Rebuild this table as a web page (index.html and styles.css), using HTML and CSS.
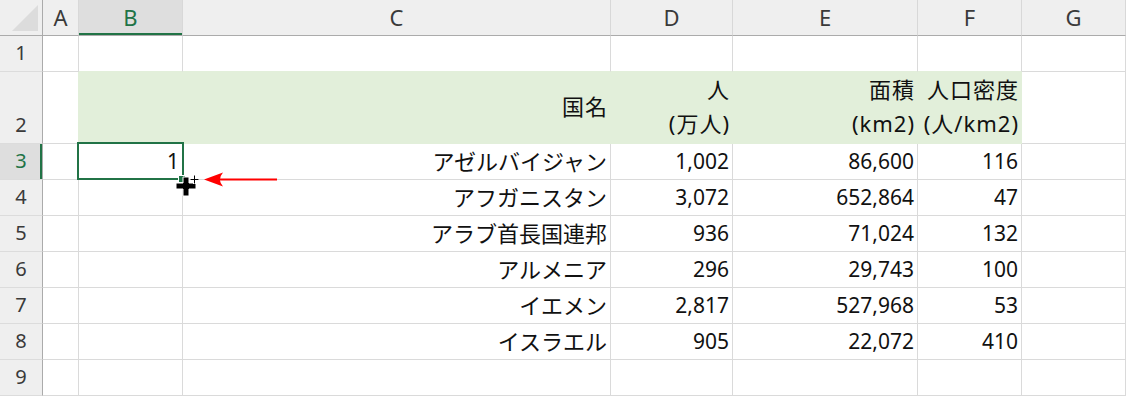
FILE: index.html
```html
<!DOCTYPE html>
<html lang="ja">
<head>
<meta charset="utf-8">
<title>Sheet</title>
<link rel="stylesheet" href="styles.css">
</head>
<body>
<div class="wrap">
  <div class="sheet">
    <div class="corner"><svg width="42" height="35" viewBox="0 0 42 35"><polygon points="12,31 38,31 38,5" fill="#dcdcdc"/></svg></div>
    <div class="ch">A</div>
    <div class="ch sel">B</div>
    <div class="ch">C</div>
    <div class="ch">D</div>
    <div class="ch">E</div>
    <div class="ch">F</div>
    <div class="ch">G</div>

    <div class="rh">1</div>
    <div class="c"></div>
    <div class="c gt"></div>
    <div class="c gt"></div>
    <div class="c gt"></div>
    <div class="c gt"></div>
    <div class="c gt"></div>
    <div class="c"></div>

    <div class="rh">2</div>
    <div class="c gl"></div>
    <div class="c g"></div>
    <div class="c g hd"><div class="lines">国名</div></div>
    <div class="c g hd"><div class="lines">人<br>(万人)</div></div>
    <div class="c g hd"><div class="lines">面積<br>(km2)</div></div>
    <div class="c g hd"><div class="lines">人口密度<br>(人/km2)</div></div>
    <div class="c"></div>

    <div class="rh sel">3</div>
    <div class="c"></div>
    <div class="c"><span class="one">1</span></div>
    <div class="c"><span class="jp">アゼルバイジャン</span></div>
    <div class="c">1,002</div>
    <div class="c">86,600</div>
    <div class="c">116</div>
    <div class="c"></div>

    <div class="rh">4</div>
    <div class="c"></div>
    <div class="c"></div>
    <div class="c"><span class="jp">アフガニスタン</span></div>
    <div class="c">3,072</div>
    <div class="c">652,864</div>
    <div class="c">47</div>
    <div class="c"></div>

    <div class="rh">5</div>
    <div class="c"></div>
    <div class="c"></div>
    <div class="c"><span class="jp">アラブ首長国連邦</span></div>
    <div class="c">936</div>
    <div class="c">71,024</div>
    <div class="c">132</div>
    <div class="c"></div>

    <div class="rh">6</div>
    <div class="c"></div>
    <div class="c"></div>
    <div class="c"><span class="jp">アルメニア</span></div>
    <div class="c">296</div>
    <div class="c">29,743</div>
    <div class="c">100</div>
    <div class="c"></div>

    <div class="rh">7</div>
    <div class="c"></div>
    <div class="c"></div>
    <div class="c"><span class="jp">イエメン</span></div>
    <div class="c">2,817</div>
    <div class="c">527,968</div>
    <div class="c">53</div>
    <div class="c"></div>

    <div class="rh">8</div>
    <div class="c"></div>
    <div class="c"></div>
    <div class="c"><span class="jp">イスラエル</span></div>
    <div class="c">905</div>
    <div class="c">22,072</div>
    <div class="c">410</div>
    <div class="c"></div>

    <div class="rh">9</div>
    <div class="c"></div>
    <div class="c"></div>
    <div class="c"></div>
    <div class="c"></div>
    <div class="c"></div>
    <div class="c"></div>
    <div class="c"></div>
  </div>

  <div class="selbox"></div>
  <div class="handle"></div>
  <svg class="cursor" width="30" height="26" viewBox="0 0 30 26">
    <polygon points="8,2 14,2 14,8 21,8 21,14 14,14 14,21 8,21 8,14 1,14 1,8 8,8" fill="#000" stroke="#fff" stroke-width="1"/>
    <path d="M15 4.5 H24 M19.5 0 V9" stroke="#fff" stroke-width="3"/>
    <path d="M15.5 4.5 H23.5 M19.5 0.5 V8.5" stroke="#000" stroke-width="1"/>
  </svg>
  <svg class="arrow" width="80" height="20" viewBox="0 0 80 20">
    <path d="M14 8.5 H73 V10.5 H14 Z" fill="#f00"/>
    <path d="M0 9.5 L19 2.5 Q13 9.5 19 16.5 Z" fill="#f00"/>
  </svg>
</div>
</body>
</html>
```

FILE: styles.css
```css
html, body {
  margin: 0;
  padding: 0;
  background: #fff;
  overflow: hidden;
}

body {
  font-family: "Noto Sans", "Noto Sans CJK JP", sans-serif;
  color: #111;
}

.wrap {
  position: relative;
  width: 1126px;
  height: 396px;
}

.sheet {
  display: grid;
  grid-template-columns: 43px 36px 104px 428px 122px 185px 104px 1fr;
  grid-template-rows: 36px 36px 72px repeat(7, 36px);
}

.sheet > div {
  box-sizing: border-box;
  border-right: 1px solid #dadada;
  border-bottom: 1px solid #dadada;
  min-width: 0;
  overflow: visible;
  white-space: nowrap;
}

.corner {
  background: #efefef;
  border-right-color: #ababab !important;
  border-bottom-color: #ababab !important;
  display: flex;
}

.ch {
  background: #efefef;
  border-bottom-color: #ababab !important;
  border-right-color: #d8d8d8 !important;
  display: flex;
  justify-content: center;
  align-items: flex-end;
  font-size: 22px;
  line-height: 28px;
  padding-bottom: 4px;
  color: #3a3a3a;
}

.ch.sel {
  background: #dedede;
  color: #217346;
  box-shadow: inset 0 -2px 0 #217346;
}

.rh {
  background: #efefef;
  border-right-color: #ababab !important;
  border-bottom-color: #dcdcdc !important;
  display: flex;
  justify-content: center;
  align-items: flex-end;
  font-size: 20px;
  line-height: 28px;
  padding-bottom: 4px;
  color: #3a3a3a;
}

.rh.sel {
  background: #dedede;
  color: #217346;
  box-shadow: inset -2px 0 0 #217346;
}

.c {
  display: flex;
  justify-content: flex-end;
  align-items: flex-end;
  font-size: 21px;
  line-height: 28px;
  padding: 0 3px 4px 0;
}

.jp {
  font-size: 22px;
}

.one {
  font-size: 21px;
}

.g {
  background: #e2efda;
  border-right-color: #e2efda !important;
  border-bottom-color: #e2efda !important;
}

.gt {
  border-bottom-color: #e2efda !important;
}

.gl {
  border-right-color: #e2efda !important;
}

.hd {
  align-items: center;
  padding: 0 2px 3px 0;
  font-size: 22px;
}

.lines {
  text-align: right;
  line-height: 34px;
  letter-spacing: 1px;
}

.selbox {
  position: absolute;
  left: 77px;
  top: 142px;
  width: 107px;
  height: 38px;
  box-sizing: border-box;
  border: 2px solid #217346;
}

.handle {
  position: absolute;
  left: 178px;
  top: 175px;
  width: 6px;
  height: 6px;
  background: #217346;
  border: 1px solid #fff;
}

.cursor {
  position: absolute;
  left: 175px;
  top: 175px;
}

.arrow {
  position: absolute;
  left: 204px;
  top: 170px;
}
```
